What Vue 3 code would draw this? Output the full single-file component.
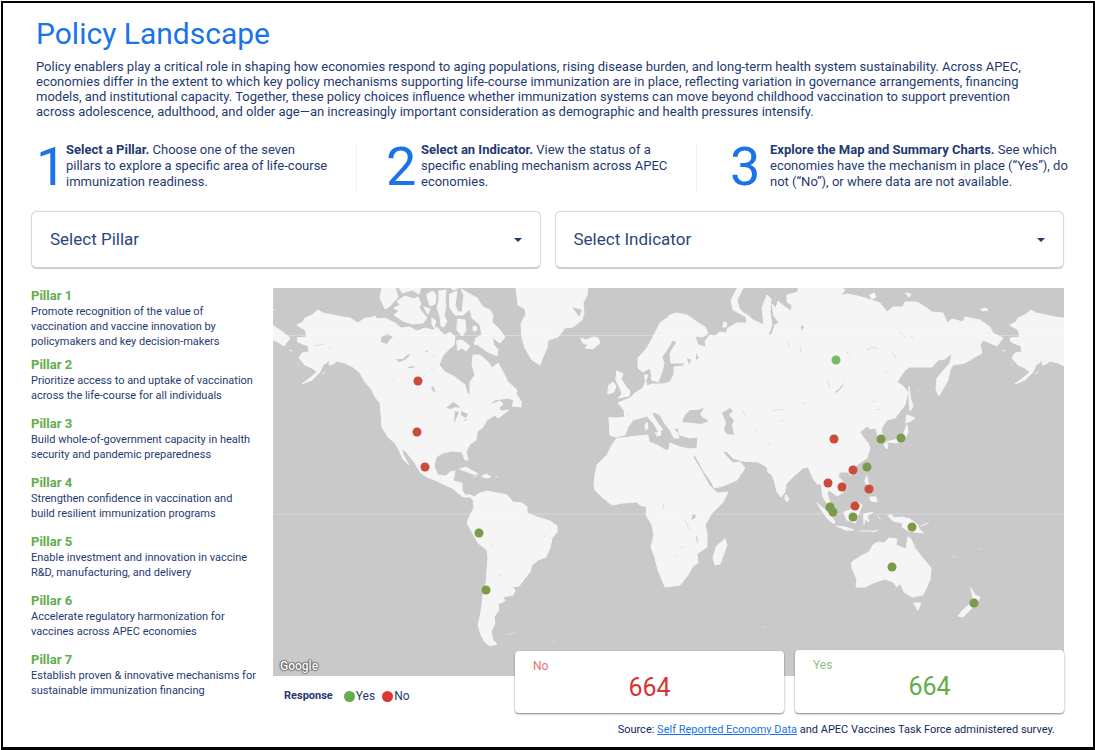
<script setup>
import { ref } from 'vue'

const pillar = ref('')
const indicator = ref('')

const intro = [
  'Policy enablers play a critical role in shaping how economies respond to aging populations, rising disease burden, and long-term health system sustainability. Across APEC,',
  'economies differ in the extent to which key policy mechanisms supporting life-course immunization are in place, reflecting variation in governance arrangements, financing',
  'models, and institutional capacity. Together, these policy choices influence whether immunization systems can move beyond childhood vaccination to support prevention',
  'across adolescence, adulthood, and older age—an increasingly important consideration as demographic and health pressures intensify.',
].join('\n')

const steps = [
  { n: 1, title: 'Select a Pillar.', first: ' Choose one of the seven', rest: 'pillars to explore a specific area of life-course\nimmunization readiness.' },
  { n: 2, title: 'Select an Indicator.', first: ' View the status of a', rest: 'specific enabling mechanism across APEC\neconomies.' },
  { n: 3, title: 'Explore the Map and Summary Charts.', first: ' See which', rest: 'economies have the mechanism in place (“Yes”), do\nnot (“No”), or where data are not available.' },
]

const pillars = [
  'Promote recognition of the value of\nvaccination and vaccine innovation by\npolicymakers and key decision-makers',
  'Prioritize access to and uptake of vaccination\nacross the life-course for all individuals',
  'Build whole-of-government capacity in health\nsecurity and pandemic preparedness',
  'Strengthen confidence in vaccination and\nbuild resilient immunization programs',
  'Enable investment and innovation in vaccine\nR&D, manufacturing, and delivery',
  'Accelerate regulatory harmonization for\nvaccines across APEC economies',
  'Establish proven & innovative mechanisms for\nsustainable immunization financing',
]

const markers = [
  [418, 381, 'no'], [417, 432, 'no'], [425, 467, 'no'], [834, 439, 'no'], [853, 470, 'no'],
  [828, 483, 'no'], [842, 487, 'no'], [869, 489, 'no'], [855, 506, 'no'],
  [479, 533, 'yes'], [486, 590, 'yes'], [881, 439, 'yes'], [901, 438, 'yes'], [867, 467, 'yes'],
  [830, 507, 'yes'], [833, 512, 'yes'], [853, 517, 'yes'], [912, 527, 'yes'], [892, 567, 'yes'],
  [974, 603, 'yes'], [836, 360, 'light'],
]
</script>

<template>
  <main class="page">
    <h1>Policy Landscape</h1>
    <p class="intro">{{ intro }}</p>

    <section class="steps">
      <div v-for="s in steps" :key="s.n" class="step">
        <span class="num">{{ s.n }}</span>
        <p>
          <span class="row"><strong>{{ s.title }}</strong>{{ s.first }}</span>
          <span class="row">{{ s.rest }}</span>
        </p>
      </div>
    </section>

    <div class="filters">
      <div class="filter">
        <select v-model="pillar" aria-label="Select Pillar">
          <option value="">Select Pillar</option>
          <option v-for="(p, i) in pillars" :key="i" :value="i + 1">Pillar {{ i + 1 }}</option>
        </select>
        <svg class="caret" viewBox="0 0 8 5" aria-hidden="true"><path d="M0 0h8L4 4z" /></svg>
      </div>
      <div class="filter">
        <select v-model="indicator" aria-label="Select Indicator">
          <option value="">Select Indicator</option>
        </select>
        <svg class="caret" viewBox="0 0 8 5" aria-hidden="true"><path d="M0 0h8L4 4z" /></svg>
      </div>
    </div>

    <div class="body">
      <aside>
        <section v-for="(p, i) in pillars" :key="i" class="pillar">
          <h2>Pillar {{ i + 1 }}</h2>
          <p>{{ p }}</p>
        </section>
      </aside>

      <div class="main">
        <div class="map">
          <svg viewBox="273 288 791 388" role="img" aria-label="World map of responses">
            <defs>
              <g id="north-america">
                <path d="M297 325L303 322 305 318 312 315 318 310 323 313 333 315 342 317 350 318 358 323 365 318 370 318 375 316 377 319 385 318 395 323 401 328 410 327 417 331 425 328 433 330 437 327 441 332 445 335 450 332 455 337 454 345 448 350 442 357 439 365 445 372 455 377 465 385 467 393 470 395 470 382 475 375 472 365 473 355 480 355 488 362 492 368 498 363 503 372 508 382 517 390 516 394 521 401 521 407 512 406 514 400 508 398 495 400 489 405 500 401 503 404 499 408 501 411 509 410 498 418 495 415 487 420 483 427 477 432 476 440 470 444 466 452 468 460 465 460 462 452 452 451 443 453 436 457 434 467 438 475 446 476 450 472 455 471 453 481 462 483 462 490 465 495 470 495 475 497 473 500 470 497 463 497 458 493 452 488 443 484 437 481 427 477 420 472 415 463 407 453 402 448 403 455 409 465 403 459 398 448 395 443 388 437 382 427 381 413 380 403 375 397 372 390 365 382 360 373 353 367 345 363 337 361 333 364 329 365 330 360 323 365 320 372 312 380 302 384 310 378 317 372 312 368 305 365 299 358 302 353 309 352 308 346 298 342 297 338 307 337 305 330Z" />
                <path d="M289 350l3 1M298 364l1 1M322 374l3-2" />
              </g>
            </defs>
            <rect x="273" y="288" width="791" height="388" fill="#c9c9c9" />
            <g class="land">
              <use href="#north-america" />
              <use href="#north-america" x="713" />
              <path d="M272 325L280 330 290 338 284 346 278 342 272 340ZM272 309l2 1-2 1Z" />
              <path d="M382 287L380 298 385 309 390 306 398 297 395 287ZM399 287L402 293 412 290 419 294 421 287ZM397 301L405 296 414 299 418 297 421 304 419 308 427 318 423 323 413 324 403 321 394 315 399 311 394 308 400 305Z" />
              <path d="M427 294l6-3 3 4-1 9-5 2-2-6ZM424 307l6 2-2 5ZM439 291l7-1-1 10 1 6-2 10 3 5-3 6-3-1-1-10-3-8 2-8ZM432 318l4 3-2 7-2-4ZM450 287h10l-6 3Z" />
              <path d="M450 294L457 291 455 305 458 312 462 312 464 295 461 289 470 294 477 298 483 307 490 310 493 315 492 322 500 330 505 337 500 343 492 337 494 345 498 350 497 356 488 352 478 345 474 344 476 338 482 335 480 325 472 318 470 309 463 315 455 315 450 308Z" />
              <path d="M458 319l7 1 1 11-4 5-5-6ZM457 341l5-1 8 6-4 5-4-3-4 2ZM473 327l3-1 1 4-3 1Z" />
              <path d="M516 287L518 305 525 309 526 314 521 324 522 338 525 348 532 360 540 365 543 357 547 348 548 340 558 337 565 328 573 327 582 320 584 313 583 303 587 295 588 287Z" />
              <path d="M581 338L586 340 593 337 598 338 600 343 593 349 585 348 588 345 583 343ZM617 371L623 374 621 379 627 388 630 391 629 396 618 398 622 394 620 388 616 380ZM609 385L613 382 616 386 614 392 608 394Z" />
              <path d="M460 469L466 467 478 474 473 474ZM482 476l4-2 5 3-5 1ZM474 476h2M496 477h1" />
              <path d="M473 498L474 508 470 515 467 523 472 532 478 543 487 550 488 557 487 570 486 583 483 595 482 605 480 617 478 625 481 635 485 642 490 646 497 644 493 640 491 632 495 623 494 617 499 610 498 604 505 601 503 597 513 595 515 590 512 587 519 586 530 572 532 565 538 560 546 557 550 548 552 538 557 532 557 526 550 521 537 517 527 513 527 507 522 503 513 502 507 495 497 493 487 491 480 493Z" />
              <path d="M609 418L610 435 615 437 625 435 628 427 633 420 640 418 647 416 654 424 659 433 656 436 661 435 660 430 663 430 657 422 652 414 654 412 660 415 665 424 670 430 674 438 679 438 678 433 673 429 678 428 680 435 690 438 698 437 697 448 690 449 680 447 670 443 669 450 665 450 657 445 649 442 648 435 637 436 623 438 617 438 612 445 607 455 597 465 595 475 594 485 595 490 602 497 612 505 623 503 637 502 640 505 647 507 646 515 652 525 654 535 651 547 655 558 658 570 663 582 665 587 680 585 688 575 693 566 698 563 697 554 707 547 707 533 705 525 712 513 723 502 728 492 717 493 713 489 709 485 702 472 693 457 695 455 703 470 712 483 714 488 723 486 737 480 745 468 740 462 733 463 728 458 723 452 726 451 733 458 742 461 758 462 767 467 768 472 772 475 775 483 777 492 781 497 785 492 786 484 793 477 803 468 808 467 813 478 817 484 821 484 823 497 827 503 832 512 833 508 830 503 827 493 829 490 837 496 842 493 847 488 843 482 838 476 840 472 850 472 857 465 867 458 870 448 868 443 863 437 860 432 867 426 870 429 876 428 878 437 883 437 881 429 887 420 895 418 905 405 908 392 903 386 897 382 905 370 910 367 927 367 932 367 938 360 945 359 952 353 950 363 937 378 936 390 939 396 948 380 950 370 953 365 965 363 975 357 982 353 980 345 983 340 990 343 997 346 1003 338 993 333 990 327 980 320 965 317 963 322 952 319 947 323 943 313 932 312 925 307 917 302 905 302 903 307 893 307 887 312 880 303 865 298 857 296 847 294 840 296 845 290 840 287 798 287 798 292 787 295 787 302 792 305 791 311 785 307 778 301 776 308 772 304 774 316 779 323 775 325 772 334 768 336 772 325 770 312 771 299 767 295 762 308 764 325 753 320 745 313 747 323 737 323 728 328 726 333 720 332 715 336 710 335 705 341 706 347 698 345 695 336 703 337 708 333 705 327 697 322 687 315 677 313 670 315 667 318 660 323 653 337 647 348 638 358 638 368 643 372 650 368 653 380 658 382 662 372 664 363 662 357 670 345 672 340 677 342 673 348 670 353 671 363 685 363 683 366 674 367 674 374 670 382 663 384 652 384 647 386 644 375 648 375 643 388 635 393 630 398 618 403 624 410 625 417 617 418Z" />
              <path d="M738 287L731 300 733 310 747 317 739 308 737 300 743 288ZM724 322l3 1-1 4-3 0ZM645 425l2-3 1 6-2 2ZM655 433l6-1-1 3ZM651 377l3 1-1 3Z" />
              <path d="M909 387L911 400 913 406 910 411 909 401ZM907 415l8 3-4 3-5 2ZM907 425l1 7-4 8-8 3-10-1 12-3 5-4ZM885 443l3 1-1 5-3-3ZM867 476l1 6 4 7-5-3-2-5ZM870 497l6 0 1 5-6-1ZM849 473l3-1-1 3ZM786 495l3 4-2 3-2-3ZM981 309l5-1 2 2-5 1ZM870 295l4-2 2 4-4 2ZM906 293l5 1-2 3Z" />
              <path d="M817 503L825 510 835 521 834 524 828 519 822 511ZM837 526L845 527 854 530 846 530ZM844 512L850 510 858 502 862 505 859 513 855 523 847 520ZM864 514L873 512 867 516 869 522 865 519 864 524ZM860 531h6l8 0M873 532l5-2M878 516l2 3M888 515L892 515 893 518 902 517 910 519 917 524 920 530 924 533 915 532 908 531 902 527 903 523 893 521ZM921 526l7-3" />
              <path d="M852 562L861 556 869 552 873 545 878 542 884 543 889 538 897 539 896 545 906 549 908 537 911 539 915 548 922 557 931 568 930 580 923 595 912 597 904 592 900 583 897 587 893 582 885 579 873 583 865 587 856 587 857 580 852 568ZM914 603l7 0-3 7Z" />
              <path d="M971 588L975 595 980 597 975 607 972 603 973 598ZM969 605L972 608 963 617 958 616 962 611ZM725 539L727 545 720 564 715 565 713 558 716 547Z" />
            </g>
            <g fill="#c9c9c9">
              <path d="M690 410L685 415 682 422 693 423 701 424 709 421 702 417 700 414 704 408 697 410ZM722 413L730 408 733 411 729 415 734 420 732 425 734 435 727 434 724 430 726 423Z" />
              <path d="M381 337l7-3 5 3-3 2-3 5-6-2ZM396 359l7 0 4-4 4-1-6 6-6 2ZM407 368l4-2 5 1-5 1ZM431 387l2-1 3 7-3-2ZM446 408l7-6 5 3 2 3-5-1-4 2ZM455 411l4 1-3 7-2 4ZM461 411l7 3-2 4-5-3ZM463 420l5-1-3 2ZM425 351l3-1-1 3ZM687 358l4 2-2 5ZM696 353l3 5-3 2ZM801 325l3 2-3 4ZM693 514l3 1-1 3-4 2ZM696 535l1 1 1 6-1 1ZM687 528l5 3ZM572 307l10 3-3 7-3-5Z" />
              <path d="M834 393Q842 391 844 382L840 388Z" />
            </g>
            <g class="detail">
              <path d="M773 411q4-3 10-1M803 404l3-1M743 411l2 4M800 347l1 5M788 342l1 5M827 380l3 7M846 352l3 3M867 350l5-3 6 2M900 332l5 6M910 336l3 2M893 353l3 5M876 410l4-1M885 371l2 3M872 402l4-1M663 509l1-6M685 520l4 9M681 548l3-1M676 555l2 1M498 575l3 0M490 545l2 1M544 537l2-2M627 415l2-1M315 346l9-2M329 347l2 2M392 379l1 1M432 357l3-3M431 368l2 2M424 375v2M780 421l3-1M768 445l2-2M754 430l2 1" />
            </g>
            <g class="tiny"><path d="M319 474h2M508 634h3M513 633h2M553 642h2M764 627h2M1031 474h2M918 391l2-1M953 556l3 2M978 549h2M934 526l2 1" /></g>
            <path d="M273 335.500H1064M273 514H1064" stroke="#fff" stroke-opacity=".3" fill="none" />
            <circle v-for="(m, i) in markers" :key="i" :cx="m[0]" :cy="m[1]" r="4.500" :class="m[2]" />
          </svg>
          <span class="google">Google</span>
        </div>
        <div class="under">
          <div class="legend">
            <strong>Response</strong>
            <span><i class="dot dot-yes"></i>Yes</span>
            <span><i class="dot dot-no"></i>No</span>
          </div>
          <div class="card card-no"><span>No</span><b>664</b></div>
          <div class="card card-yes"><span>Yes</span><b>664</b></div>
        </div>
        <p class="source">Source: <a href="#">Self Reported Economy Data</a> and APEC Vaccines Task Force administered survey.</p>
      </div>
    </div>
  </main>
</template>

<style>
html { background: #fff; }
</style>

<style scoped>
* { box-sizing: border-box; }
.page {
  min-height: calc(100vh - 1px);
  margin: 1px 0 0 1px;
  padding: 13px 29px 0 28px;
  border: 2px solid #000;
  border-bottom-width: 3px;
  background: #fff;
  color: #1f3a72;
  font-family: Roboto, "Liberation Sans", sans-serif;
}
h1, h2, p { margin: 0; }
h1 { padding-left: 5px; font-size: 30px; line-height: 36px; font-weight: 400; color: #1a73e8; }
.intro { margin-top: 7px; padding-left: 5px; font-size: 13px; line-height: 15px; white-space: pre; }
.steps { display: grid; grid-template-columns: minmax(0, 325fr) minmax(0, 340fr) minmax(0, 368fr); margin-top: 23px; }
.step { display: flex; padding-left: 5px; }
.step:nth-child(2) { padding-left: 29px; }
.step:nth-child(3) { padding-left: 33px; }
.step + .step { border-left: 1px solid #f3f3f3; }
.num { flex: none; width: 30px; font-size: 54px; line-height: 50px; color: #1a73e8; }
.step:nth-child(2) .num { width: 35px; }
.step:nth-child(3) .num { width: 40px; }
.step p { font-size: 13px; line-height: 16px; }
.row { display: block; white-space: pre; }
.step strong { font-weight: 700; }
.filters { display: grid; grid-template-columns: 1fr 1fr; gap: 14px; margin-top: 19px; }
.filter { position: relative; }
select {
  display: block;
  width: 100%;
  height: 58px;
  padding: 0 40px 2px 18px;
  border: 1px solid #dadada;
  border-bottom: 2px solid #d0d0d0;
  border-radius: 6px;
  appearance: none;
  background: #fff;
  box-shadow: 0 0 1px #ccc;
  color: #2c4679;
  font: 400 17px Roboto, "Liberation Sans", sans-serif;
}
.caret { position: absolute; right: 19px; top: 27px; width: 8px; height: 5px; fill: #1f3a72; pointer-events: none; }
.body { display: grid; grid-template-columns: 242px 1fr; margin-top: 19px; }
aside { display: flex; flex-direction: column; }
.pillar { min-height: 59px; }
.pillar:first-child { min-height: 69px; }
h2 { font-size: 13px; line-height: 16px; font-weight: 700; color: #62ad4c; }
.pillar p { font-size: 11px; line-height: 15px; white-space: pre; }
.map { position: relative; }
.map svg { display: block; width: 100%; height: auto; }
.land { fill: #f5f5f5; stroke: #f5f5f5; stroke-width: 1; stroke-linejoin: round; stroke-linecap: round; }
.detail, .tiny { fill: none; stroke: #dedede; stroke-width: 1; stroke-linecap: round; }
.no { fill: #cb4b3d; }
.yes { fill: #7a9b49; }
.light { fill: #79b965; }
.google {
  position: absolute;
  left: 7px;
  bottom: 3px;
  color: #fff;
  font: 500 12px/14px Roboto, sans-serif;
  text-shadow: 0 0 1px #444, 0 0 1px #444, 0 0 2px #555, 0 0 2px #555;
}
.under { position: relative; display: flex; align-items: flex-end; height: 37px; }
.legend { flex: 1; align-self: center; display: flex; align-items: center; margin-top: 3px; padding-left: 11px; font-size: 12px; line-height: 14px; }
.legend strong { margin-right: 11px; font-size: 11px; }
.legend span { display: flex; align-items: center; margin-right: 7px; }
.dot { width: 11px; height: 11px; margin-right: 1px; border-radius: 50%; }
.dot-yes { background: #62ad4c; }
.dot-no { background: #dc3535; }
.card {
  position: relative;
  width: 269px;
  height: 62px;
  padding: 7px 18px;
  border-radius: 4px;
  background: #fff;
  box-shadow: 0 1px 2px rgba(0, 0, 0, .5);
}
.card span { display: block; font-size: 12px; line-height: 16px; }
.card b { display: block; font-size: 25px; line-height: 28px; font-weight: 400; text-align: center; }
.card-no { color: #d93535; }
.card-no span { color: #e57373; }
.card-yes { height: 63px; margin-left: 11px; color: #62ad4c; }
.card-yes span { color: #8bc67b; }
.source { margin-top: 9px; padding-right: 9px; font-size: 11px; line-height: 16px; text-align: right; color: #10285f; }
.source a { color: #1a73e8; }
</style>
